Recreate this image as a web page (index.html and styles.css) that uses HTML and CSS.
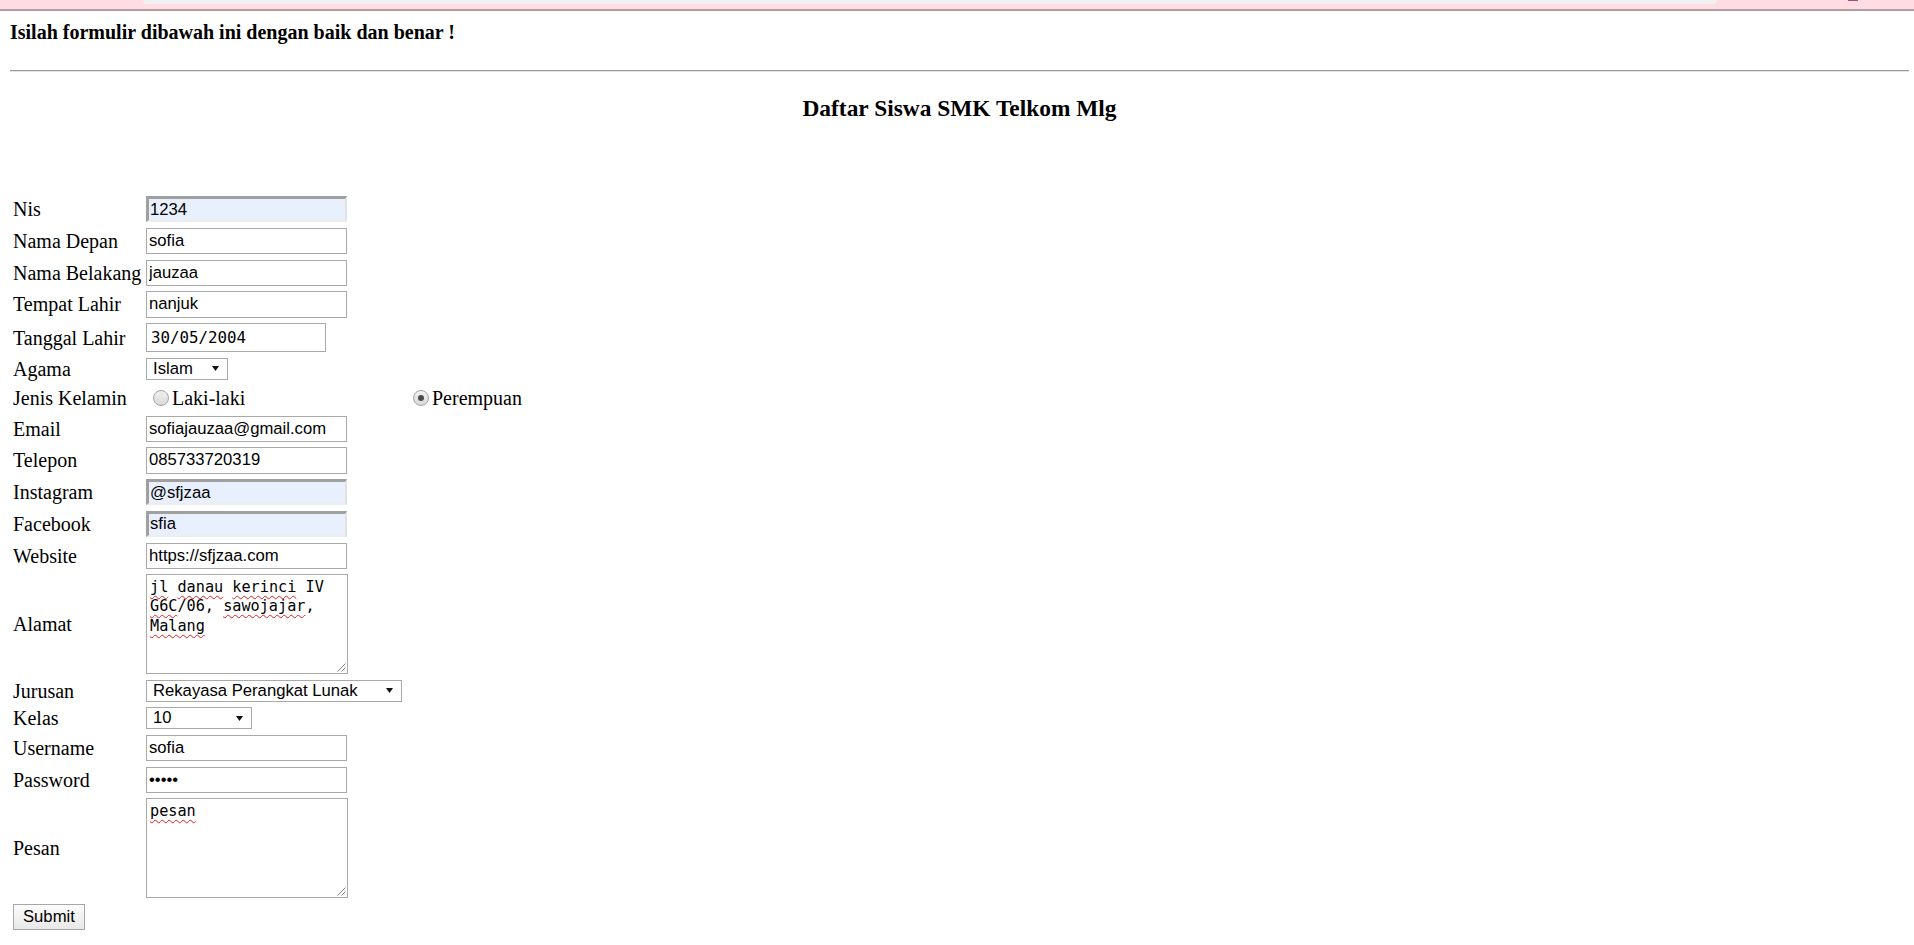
FILE: index.html
```html
<!DOCTYPE html>
<html lang="id">
<head>
<meta charset="utf-8">
<title>Daftar Siswa SMK Telkom Mlg</title>
<link rel="stylesheet" href="styles.css">
</head>
<body>
<div class="topbar">
  <div class="tab"></div>
  <div class="mark"></div>
</div>
<div class="page">
  <div class="intro">Isilah formulir dibawah ini dengan baik dan benar !</div>
  <hr class="rule">
  <h3 class="title">Daftar Siswa SMK Telkom Mlg</h3>
  <form class="form">
    <label class="lbl">Nis</label>
    <input class="field autofill" type="text" value="1234">

    <label class="lbl">Nama Depan</label>
    <input class="field" type="text" value="sofia">

    <label class="lbl">Nama Belakang</label>
    <input class="field" type="text" value="jauzaa">

    <label class="lbl">Tempat Lahir</label>
    <input class="field" type="text" value="nanjuk">

    <label class="lbl">Tanggal Lahir</label>
    <input class="date" type="text" value="30/05/2004">

    <label class="lbl">Agama</label>
    <div class="select sel-agama"><span>Islam</span><svg class="arrow" width="7" height="5" viewBox="0 0 7 5"><polygon points="0,0 7,0 3.5,5" fill="#111"/></svg></div>

    <label class="lbl">Jenis Kelamin</label>
    <div class="radios">
      <div class="opt"><input class="radio" type="radio" name="jk"><span>Laki-laki</span></div>
      <div class="opt"><input class="radio" type="radio" name="jk" checked><span>Perempuan</span></div>
    </div>

    <label class="lbl">Email</label>
    <input class="field" type="text" value="sofiajauzaa@gmail.com">

    <label class="lbl">Telepon</label>
    <input class="field" type="text" value="085733720319">

    <label class="lbl">Instagram</label>
    <input class="field autofill" type="text" value="@sfjzaa">

    <label class="lbl">Facebook</label>
    <input class="field autofill" type="text" value="sfia">

    <label class="lbl">Website</label>
    <input class="field" type="text" value="https://sfjzaa.com">

    <label class="lbl">Alamat</label>
    <div class="textarea"><span class="sp">jl</span> <span class="sp">danau</span> <span class="sp">kerinci</span> IV <span class="sp">G6C</span>/06, <span class="sp">sawojajar</span>, <span class="sp">Malang</span><svg class="grip" width="10" height="10" viewBox="0 0 10 10"><path d="M9.5 1.5 L1.5 9.5 M9.5 5.5 L5.5 9.5" stroke="#8a8a8a" stroke-width="1" fill="none"/></svg></div>

    <label class="lbl">Jurusan</label>
    <div class="select sel-jurusan"><span>Rekayasa Perangkat Lunak</span><svg class="arrow" width="7" height="5" viewBox="0 0 7 5"><polygon points="0,0 7,0 3.5,5" fill="#111"/></svg></div>

    <label class="lbl">Kelas</label>
    <div class="select sel-kelas"><span>10</span><svg class="arrow" width="7" height="5" viewBox="0 0 7 5"><polygon points="0,0 7,0 3.5,5" fill="#111"/></svg></div>

    <label class="lbl">Username</label>
    <input class="field" type="text" value="sofia">

    <label class="lbl">Password</label>
    <input class="field" type="password" value="sofia">

    <label class="lbl">Pesan</label>
    <div class="textarea"><span class="sp">pesan</span><svg class="grip" width="10" height="10" viewBox="0 0 10 10"><path d="M9.5 1.5 L1.5 9.5 M9.5 5.5 L5.5 9.5" stroke="#8a8a8a" stroke-width="1" fill="none"/></svg></div>

    <button class="submit" type="button">Submit</button>
  </form>
</div>
</body>
</html>
```
FILE: styles.css
```css
html, body {
  margin: 0;
  padding: 0;
  background: #ffffff;
}
body {
  font-family: "Liberation Serif", "Times New Roman", serif;
  color: #000;
}
.topbar {
  height: 9px;
  background: #ffdde2;
  border-bottom: 2px solid #b59ca2;
  display: flex;
  align-items: flex-start;
}
.tab {
  margin-left: 143px;
  width: 1574px;
  height: 4px;
  background: #f1f1f1;
  border-radius: 0 0 6px 6px;
}
.mark {
  margin-left: 131px;
  width: 10px;
  height: 1px;
  background: #b5467c;
}
.page {
  padding: 0 5px 0 10px;
}
.intro {
  margin-top: 9.75px;
  font-weight: bold;
  font-size: 20px;
  line-height: 23px;
}
.rule {
  margin: 26.25px 0 0 0;
  height: 0;
  border: 0;
  border-top: 1px solid #9a9a9a;
  border-bottom: 1px solid #e4e4e4;
}
.title {
  margin: 23px 0 0 0;
  text-align: center;
  font-size: 23.4px;
  line-height: 27px;
  font-weight: bold;
}
.form {
  margin: 74px 0 0 3px;
  display: grid;
  grid-template-columns: 133px auto;
  row-gap: 5.5px;
  align-items: center;
  justify-items: start;
}
.lbl {
  font-size: 20px;
  line-height: 22px;
  white-space: nowrap;
}
.field, .date {
  box-sizing: border-box;
  margin: 0;
  width: 201px;
  height: 26.25px;
  border: 1px solid #a9a9a9;
  padding: 0 2px;
  font-family: "Liberation Sans", Arial, sans-serif;
  font-size: 16.67px;
  color: #000;
  background: #fff;
  outline: none;
}
.autofill {
  background: #e8f0fe;
  border-style: solid;
  border-width: 3px 2px 2px 3px;
  border-color: #a0a0a0 #e2e2e2 #ededed #a0a0a0;
  padding: 0 1px;
}
.date {
  width: 180px;
  height: 29px;
  padding: 0 4px;
  font-family: "DejaVu Sans Mono", "Liberation Mono", monospace;
  font-size: 15.8px;
}
.select {
  box-sizing: border-box;
  height: 22px;
  border: 1px solid #a9a9a9;
  background: #fff;
  padding: 0 8px 0 6px;
  display: flex;
  align-items: center;
  justify-content: space-between;
  font-family: "Liberation Sans", Arial, sans-serif;
  font-size: 16.67px;
  line-height: 20px;
}
.sel-agama { width: 82px; }
.sel-jurusan { width: 256px; }
.sel-kelas { width: 106px; }
.arrow {
  display: block;
  flex: none;
}
.radios {
  height: 25px;
  display: flex;
  align-items: center;
  font-size: 20px;
  line-height: 22px;
}
.opt {
  display: flex;
  align-items: center;
  width: 260px;
  margin-left: 7px;
}
.opt + .opt {
  margin-left: 0;
}
.radio {
  -webkit-appearance: none;
  appearance: none;
  box-sizing: border-box;
  width: 16px;
  height: 16px;
  margin: 0 3px 0 0;
  border: 1px solid #a3a3a3;
  border-radius: 50%;
  background: linear-gradient(#f2f2f2, #d9d9d9);
  position: relative;
}
.radio:checked::after {
  content: "";
  position: absolute;
  left: 4px;
  top: 4px;
  width: 6px;
  height: 6px;
  border-radius: 50%;
  background: #4a4a4a;
}
.textarea {
  box-sizing: border-box;
  position: relative;
  width: 202px;
  height: 100px;
  border: 1px solid #a9a9a9;
  padding: 3px 3px;
  font-family: "DejaVu Sans Mono", "Liberation Mono", monospace;
  font-size: 15.2px;
  line-height: 19.2px;
  color: #000;
  background: #fff;
  overflow: hidden;
  word-wrap: break-word;
}
.sp {
  text-decoration: underline wavy #e02020;
  text-decoration-thickness: 1px;
  text-underline-offset: 3px;
  text-decoration-skip-ink: none;
}
.grip {
  position: absolute;
  right: 1px;
  bottom: 1px;
}
.submit {
  grid-column: 1 / span 2;
  box-sizing: border-box;
  width: 71.5px;
  height: 26px;
  margin: 0;
  padding: 0 9px;
  border: 1px solid #a6a6a6;
  border-radius: 0;
  background: linear-gradient(#fcfcfc, #e8e8e8);
  font-family: "Liberation Sans", Arial, sans-serif;
  font-size: 16.67px;
  color: #000;
  text-align: center;
}
```
